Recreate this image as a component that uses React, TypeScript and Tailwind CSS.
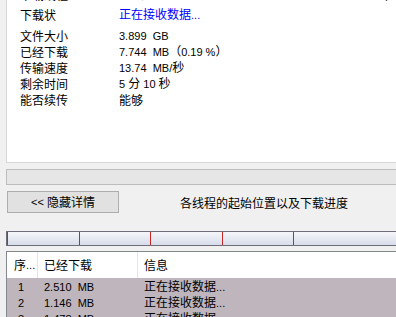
import React from "react";

const CJK = /[\u3000-\u303f\u3400-\u9fff\uff00-\uffef]/;

// split a string into CJK runs (12px Noto) and latin runs (11px Liberation)
const Mixed = ({ text }: { text: string }) => (
  <>
    {text
      .split(/([\u3000-\u303f\u3400-\u9fff\uff00-\uffef]+)/)
      .filter((p) => p !== "")
      .map((p, i) =>
        CJK.test(p) ? (
          <span key={i} className="font-['Noto_Sans_CJK_SC',sans-serif] text-[12px]">
            {p}
          </span>
        ) : (
          <span key={i} className="font-['Liberation_Sans',sans-serif] text-[11px] whitespace-pre">
            {p}
          </span>
        )
      )}
  </>
);

interface InfoRow {
  label: string;
  value: string;
  blue?: boolean;
}

const rows: InfoRow[] = [
  { label: "文件大小", value: "3.899  GB" },
  { label: "已经下载", value: "7.744  MB（0.19 %）" },
  { label: "传输速度", value: "13.74  MB/秒" },
  { label: "剩余时间", value: "5 分 10 秒" },
  { label: "能否续传", value: "能够" },
];

const threads = [
  { id: "1", done: "2.510  MB", info: "正在接收数据..." },
  { id: "2", done: "1.146  MB", info: "正在接收数据..." },
  { id: "3", done: "1.478  MB", info: "正在接收数据..." },
];

const Row = ({ label, value, blue }: InfoRow) => (
  <div className="flex h-[16px] items-center leading-[16px] whitespace-nowrap">
    <div className="w-[112px] shrink-0 pl-[13px]">
      <Mixed text={label} />
    </div>
    <div className={blue ? "text-[#0000ff]" : ""}>
      <Mixed text={value} />
    </div>
  </div>
);

export default function App() {
  return (
    <div className="w-[396px] h-[317px] overflow-hidden bg-[#f0f0f0] text-black">
      {/* details panel */}
      <div className="ml-[6px] h-[163px] overflow-hidden border-l border-b border-[#d7d7d7] bg-white">
        <div className="mt-[-14px]">
          <Row label="下载线程" value="5 个，保存到 D:\Downloads\Windows 7 Ultimate x64 (SP1).iso" />
          <div className="mt-[4px]">
            <Row label="下载状" value="正在接收数据..." blue />
          </div>
          <div className="mt-[5px]">
            {rows.map((r) => (
              <Row key={r.label} {...r} />
            ))}
          </div>
        </div>
      </div>

      {/* overall progress */}
      <div className="ml-[6px] mt-[6px] h-[16px] border border-r-0 border-[#bcbcbc] bg-[#e6e6e6]" />

      {/* button row */}
      <div className="mt-[6px] flex items-center">
        <button className="ml-[7px] flex h-[22px] w-[112px] items-center justify-center border border-[#adadad] bg-[#e1e1e1] leading-[16px]">
          <Mixed text="<< 隐藏详情" />
        </button>
        <div className="ml-[61px] leading-[16px]">
          <Mixed text="各线程的起始位置以及下载进度" />
        </div>
      </div>

      {/* thread start positions */}
      <div className="ml-[6px] mt-[18px] flex h-[15px] border border-r-0 border-[#6f6f7c] bg-linear-to-b from-[#f5f6fa] to-[#d8ddeb]">
        <div className="w-[72px] border-l border-[#c62828]" />
        <div className="w-[71px] border-l border-[#c62828]" />
        <div className="w-[72px] border-l border-[#c62828]" />
        <div className="w-[71px] border-l border-[#c62828]" />
        <div className="flex-1 border-l border-[#c62828]" />
      </div>

      {/* thread list */}
      <div className="ml-[6px] mt-[5px] border border-r-0 border-b-0 border-[#828790] bg-white">
        <div className="flex h-[26px] items-center bg-white leading-[16px]">
          <div className="flex h-full w-[31px] items-center border-r border-[#e5e5e5] pl-[7px]">
            <Mixed text="序..." />
          </div>
          <div className="flex h-full w-[100px] items-center border-r border-[#e5e5e5] pl-[6px]">
            <Mixed text="已经下载" />
          </div>
          <div className="flex h-full flex-1 items-center pl-[6px]">
            <Mixed text="信息" />
          </div>
        </div>
        {threads.map((t) => (
          <div key={t.id} className="flex h-[16px] items-center bg-[#beb5bd] leading-[16px] whitespace-nowrap">
            <div className="w-[31px] pl-[11px]">
              <Mixed text={t.id} />
            </div>
            <div className="w-[100px] pl-[6px]">
              <Mixed text={t.done} />
            </div>
            <div className="flex-1 pl-[6px]">
              <Mixed text={t.info} />
            </div>
          </div>
        ))}
      </div>
    </div>
  );
}
